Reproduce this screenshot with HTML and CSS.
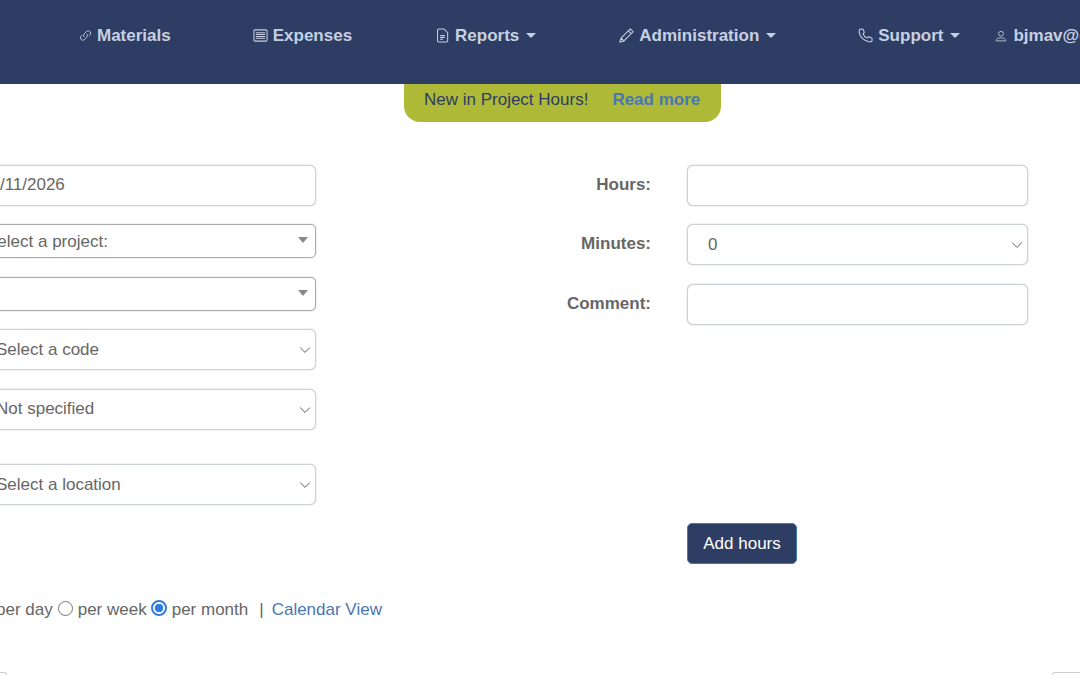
FILE: index.html
```html
<!DOCTYPE html>
<html lang="en">
<head>
<meta charset="utf-8">
<title>Project Hours</title>
<link rel="stylesheet" href="styles.css">
</head>
<body>
<nav class="nav">
  <a class="nav-item item-materials"><svg class="ico" viewBox="0 0 16 16"><path d="M6.500 10a3 3 0 0 1 0-4.200l3-3a3 3 0 0 1 4.200 4.200l-1.500 1.500"/><path d="M9.500 6a3 3 0 0 1 0 4.200l-3 3a3 3 0 0 1-4.200-4.200l1.500-1.500"/></svg><span>Materials</span></a>
  <a class="nav-item item-expenses"><svg class="ico ico-l" viewBox="0 0 16 16"><rect x="1" y="2" width="14" height="12" rx="1.200"/><path d="M3 5h10M3 7h10M3 9h10M3 11h10"/></svg><span>Expenses</span></a>
  <a class="nav-item item-reports caret"><svg class="ico ico-l" viewBox="0 0 16 16"><path d="M4 1h5.500L13.500 5v8.700a1.300 1.300 0 0 1-1.300 1.300H4a1.300 1.300 0 0 1-1.300-1.300V2.300A1.300 1.300 0 0 1 4 1z"/><path d="M5.500 8h5M5.500 10h5M5.500 12h3"/></svg><span>Reports</span></a>
  <a class="nav-item item-admin caret"><svg class="ico ico-l" viewBox="0 0 16 16"><path d="M12 1l3 3-9.800 9.800-4.200 1.200 1.200-4.200zM10 3l3 3M2.200 10.800l3 3"/></svg><span>Administration</span></a>
  <a class="nav-item item-support caret"><svg class="ico ico-l" viewBox="0 0 16 16"><path d="M3.200 1L5.300 1.300l1.500 3.300-1.400 1.600c.6 1.900 2.500 3.800 4.500 4.500l1.600-1.400 3.300 1.500.3 2.100c0 1-1 2-2.500 2C6.800 14.600 1.200 9 1.200 3.200 1.200 2 2.200 1 3.200 1z"/></svg><span>Support</span></a>
  <a class="nav-item item-user caret"><svg class="ico ico-u" viewBox="0 0 16 16"><circle cx="8" cy="5" r="3.200"/><path d="M1.500 14.500c0-3 2.500-4 6.500-4s6.500 1 6.500 4z"/></svg><span>bjmav@example.com</span></a>
</nav>

<div class="notice"><span>New in Project Hours!</span><a class="notice-link">Read more</a></div>

<form class="form">
  <div class="col col-left">
    <div class="control"><span class="clip clip-date">03/11/2026</span></div>
    <div class="control combo"><span class="clip clip-project">Select a project:</span><i class="tri"></i></div>
    <div class="control combo"><i class="tri"></i></div>
    <div class="control select"><span class="clip clip-sel">Select a code</span><svg class="chev" viewBox="0 0 16 16"><path d="M2 5l6 6 6-6"/></svg></div>
    <div class="control select"><span class="clip clip-sel">Not specified</span><svg class="chev" viewBox="0 0 16 16"><path d="M2 5l6 6 6-6"/></svg></div>
    <div class="control select loc"><span class="clip clip-sel">Select a location</span><svg class="chev" viewBox="0 0 16 16"><path d="M2 5l6 6 6-6"/></svg></div>
  </div>
  <div class="col col-right">
    <div class="field"><label class="lbl">Hours:</label><div class="control"></div></div>
    <div class="field"><label class="lbl">Minutes:</label><div class="control select"><span class="zero">0</span><svg class="chev" viewBox="0 0 16 16"><path d="M2 5l6 6 6-6"/></svg></div></div>
    <div class="field"><label class="lbl">Comment:</label><div class="control"></div></div>
    <button type="button" class="btn">Add hours</button>
  </div>
</form>

<div class="views">
  <span class="view-day">per day</span>
  <i class="radio"></i><span>per week</span>
  <i class="radio on"></i><span>per month</span>
  <span class="sep">|</span>
  <a class="cal">Calendar View</a>
</div>

<div class="cards"><div class="card-a"></div><div class="card-b"></div></div>
</body>
</html>
```
FILE: styles.css
```css
html, body { margin: 0; padding: 0; }
body {
  width: 1080px; height: 675px; overflow: hidden; background: #fff;
  font-family: "Liberation Sans", Arial, sans-serif; font-size: 17px; color: #666;
}
.nav { height: 84px; background: #2e3d63; display: flex; align-items: center; padding-bottom: 13px; box-sizing: border-box; white-space: nowrap; }
.nav-item { display: flex; align-items: center; color: #c6d0e2; font-weight: 700; font-size: 17px; flex: none; }
.ico { width: 13px; height: 13px; margin-right: 5px; fill: none; stroke: #c6d0e2; stroke-width: 1.100; }
.ico-l { width: 15px; height: 15px; margin-right: 5px; }
.ico-u { width: 12px; height: 12px; margin-right: 6px; }
.caret::after { content: ""; border-top: 5px solid #c6d0e2; border-left: 5px solid transparent; border-right: 5px solid transparent; margin-left: 7px; }
.item-materials { margin-left: 79px; }
.item-expenses { margin-left: 82px; }
.item-reports { margin-left: 83px; }
.item-admin { margin-left: 83px; }
.item-support { margin-left: 82px; }
.item-user { margin-left: 35px; }
.notice { margin-left: 404px; width: 317px; height: 38px; box-sizing: border-box; background: #aeb938; border-radius: 0 0 16px 16px; display: flex; align-items: center; padding: 0 0 7px 20px; color: #2e3d63; }
.notice-link { margin-left: 24px; color: #4a76b4; font-weight: 700; }
.form { display: flex; margin-top: 42.500px; height: 432.500px; }
.col-left { width: 356px; flex: none; margin-left: -40px; display: flex; flex-direction: column; gap: 18.500px; }
.control { position: relative; height: 41px; box-sizing: border-box; border: 1px solid #cdd2d6; border-radius: 6px; background: #fff; display: flex; align-items: center; box-shadow: 0 0 1.500px #bbb; flex: none; }
.clip { white-space: nowrap; }
.clip-date { margin-left: 20px; }
.combo { height: 34px; border-color: #aaa; border-radius: 5px; }
.clip-project { margin-left: 25px; margin-top: 2px; }
.tri { position: absolute; right: 7px; top: 12px; border-top: 6px solid #888; border-left: 5px solid transparent; border-right: 5px solid transparent; }
.select { padding-top: .5px; }
.loc { margin-top: 16px; }
.clip-sel { margin-left: 35px; }
.chev { position: absolute; right: 2px; top: 12px; width: 16px; height: 16px; fill: none; stroke: #555; stroke-width: 1.200; transform: scale(.8); }
.col-right { width: 712px; flex: none; display: flex; flex-direction: column; align-items: flex-end; gap: 18.500px; }
.field { display: flex; align-items: center; justify-content: flex-end; width: 100%; }
.field .control { width: 341px; }
.lbl { font-weight: 700; margin-right: 36px; margin-top: -.5px; }
.zero { margin-left: 20px; margin-top: 1px; }
.btn { margin: 180px auto 0 371px; width: 110px; height: 41px; background: #2e3d63; color: #fff; font: 17px "Liberation Sans", Arial, sans-serif; border: 1px solid #4a76b4; border-radius: 5px; flex: none; }
.views { margin-left: -4px; height: 26px; display: flex; align-items: center; white-space: nowrap; gap: 5px; }
.radio { width: 15px; height: 15px; box-sizing: border-box; border: 1px solid #767676; border-radius: 50%; margin-top: -4px; flex: none; }
.radio.on { border: 2px solid #2f7de0; background: radial-gradient(circle, #2f7de0 4px, #fff 4.500px); width: 16px; height: 16px; margin-left: -1px; }
.sep { margin: 0 5px 0 6px; }
.cal { color: #4a76b4; margin-left: -2px; }
.cards { display: flex; justify-content: space-between; margin-top: 49px; margin-left: -20px; }
.card-a, .card-b { height: 3px; border: 1px solid #ccc; border-bottom: 0; border-radius: 6px 6px 0 0; box-sizing: border-box; }
.card-a { width: 27px; }
.card-b { width: 60px; margin-right: -32px; }
```
